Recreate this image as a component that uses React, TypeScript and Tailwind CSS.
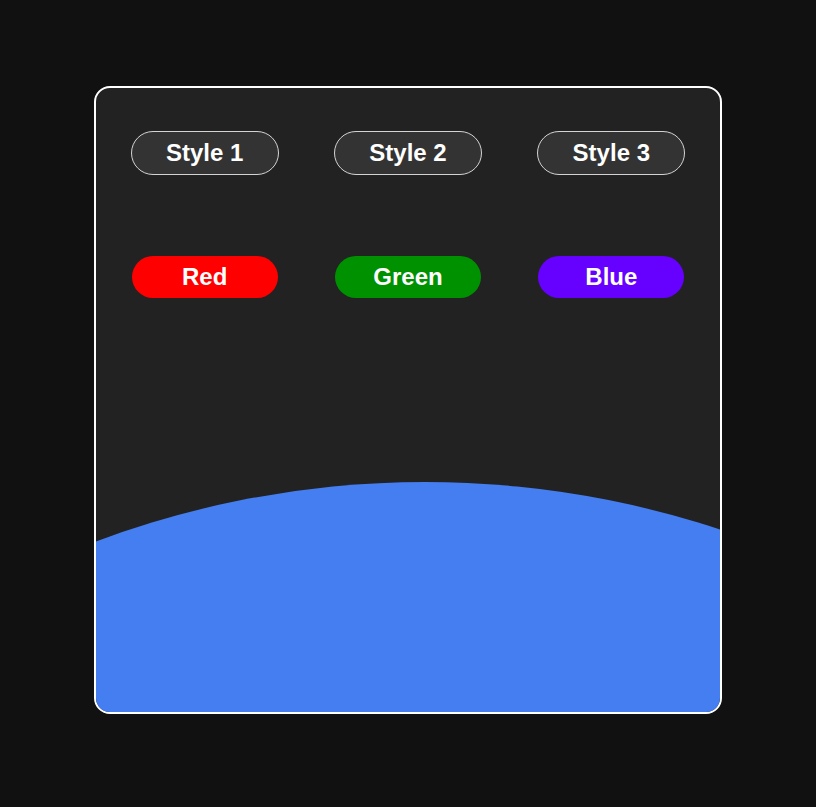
const styleButtons = ["Style 1", "Style 2", "Style 3"]

const colorButtons = [
    { label: "Red", className: "bg-[#ff0000]" },
    { label: "Green", className: "bg-[#009100]" },
    { label: "Blue", className: "bg-[#6600ff]" },
]

export default function App() {
    return (
        <div className="min-h-screen bg-[#111111] flex justify-center pt-[86px] font-['Liberation_Sans',Arial,sans-serif]">
            <div className="relative w-[628px] h-[628px] rounded-2xl border-2 border-white bg-[#222222] overflow-hidden">
                {/* big planet-like curve at the bottom */}
                <div className="absolute left-[-612px] top-[394px] w-[1882px] h-[1882px] rounded-full bg-[#447ef0]" />

                <div className="relative grid grid-cols-3 px-[7px] pt-[43px]">
                    {styleButtons.map((label) => (
                        <div key={label} className="flex justify-center">
                            <button className="w-[148px] h-[44px] rounded-full border border-[#d4d4d4] bg-[#333333] text-white text-[24px] font-bold leading-none">
                                {label}
                            </button>
                        </div>
                    ))}
                </div>

                <div className="relative grid grid-cols-3 px-[7px] mt-[81px]">
                    {colorButtons.map((b) => (
                        <div key={b.label} className="flex justify-center">
                            <button className={`w-[146px] h-[42px] rounded-full text-white text-[24px] font-bold leading-none ${b.className}`}>
                                {b.label}
                            </button>
                        </div>
                    ))}
                </div>
            </div>
        </div>
    )
}
